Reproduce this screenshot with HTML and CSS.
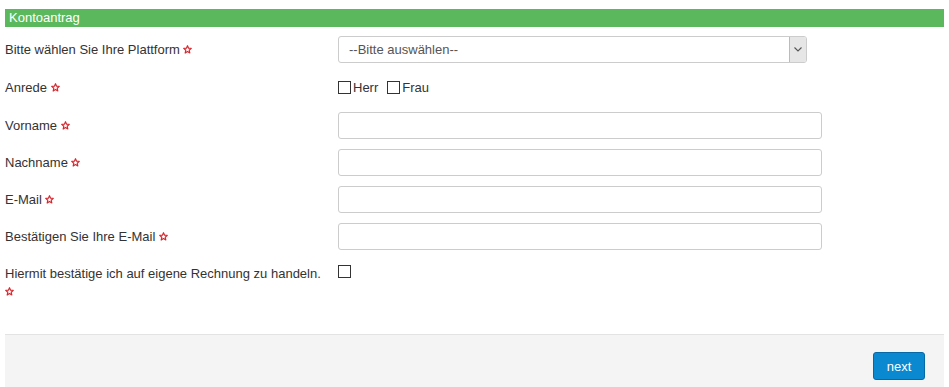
FILE: index.html
```html
<!DOCTYPE html>
<html>
    <head>
        <title>Kontoantrag</title>
        <link rel="stylesheet" href="styles.css">
    </head>
<body>
    <div class="panel">
        <div class="panel-title">Kontoantrag</div>

        <form class="form">
            <div class="row">
                <label>Bitte wählen Sie Ihre Plattform <svg class="req" viewBox="0 0 10 10"><path d="M5 0.8 L6.2 3.6 L9.2 3.8 L6.9 5.8 L7.6 8.9 L5 7.3 L2.4 8.9 L3.1 5.8 L0.8 3.8 L3.8 3.6 Z"/></svg></label>
                <div class="select">
                    <span>--Bitte auswählen--</span>
                    <span class="arrow">
                        <svg width="8" height="5" viewBox="0 0 8 5"><path d="M0.5 0.5 L4 4 L7.5 0.5" fill="none" stroke="#555" stroke-width="1.1"/></svg>
                    </span>
                </div>
            </div>

            <div class="row row-small">
                <label>Anrede <svg class="req" viewBox="0 0 10 10"><path d="M5 0.8 L6.2 3.6 L9.2 3.8 L6.9 5.8 L7.6 8.9 L5 7.3 L2.4 8.9 L3.1 5.8 L0.8 3.8 L3.8 3.6 Z"/></svg></label>
                <div class="choices">
                    <span class="choice"><span class="box"></span>Herr</span>
                    <span class="choice"><span class="box"></span>Frau</span>
                </div>
            </div>

            <div class="row">
                <label>Vorname <svg class="req" viewBox="0 0 10 10"><path d="M5 0.8 L6.2 3.6 L9.2 3.8 L6.9 5.8 L7.6 8.9 L5 7.3 L2.4 8.9 L3.1 5.8 L0.8 3.8 L3.8 3.6 Z"/></svg></label>
                <input type="text" class="field">
            </div>

            <div class="row">
                <label>Nachname <svg class="req" viewBox="0 0 10 10"><path d="M5 0.8 L6.2 3.6 L9.2 3.8 L6.9 5.8 L7.6 8.9 L5 7.3 L2.4 8.9 L3.1 5.8 L0.8 3.8 L3.8 3.6 Z"/></svg></label>
                <input type="text" class="field">
            </div>

            <div class="row">
                <label>E-Mail <svg class="req" viewBox="0 0 10 10"><path d="M5 0.8 L6.2 3.6 L9.2 3.8 L6.9 5.8 L7.6 8.9 L5 7.3 L2.4 8.9 L3.1 5.8 L0.8 3.8 L3.8 3.6 Z"/></svg></label>
                <input type="text" class="field">
            </div>

            <div class="row">
                <label>Bestätigen Sie Ihre E-Mail <svg class="req" viewBox="0 0 10 10"><path d="M5 0.8 L6.2 3.6 L9.2 3.8 L6.9 5.8 L7.6 8.9 L5 7.3 L2.4 8.9 L3.1 5.8 L0.8 3.8 L3.8 3.6 Z"/></svg></label>
                <input type="text" class="field">
            </div>

            <div class="row row-top">
                <label>Hiermit bestätige ich auf eigene Rechnung zu handeln.<br><svg class="req" viewBox="0 0 10 10"><path d="M5 0.8 L6.2 3.6 L9.2 3.8 L6.9 5.8 L7.6 8.9 L5 7.3 L2.4 8.9 L3.1 5.8 L0.8 3.8 L3.8 3.6 Z"/></svg></label>
                <div><span class="box"></span></div>
            </div>
        </form>

        <div class="footer">
            <button type="button" class="btn">next</button>
        </div>
    </div>
</body>
</html>
```

FILE: styles.css
```css
body {
  margin: 0;
  padding: 9px 5px 0 5px;
  font-family: "Liberation Sans", Arial, sans-serif;
  font-size: 13px;
  color: #333;
  background-color: #fff;
}

.panel-title {
  background-color: #5cb85c;
  color: #fff;
  font-size: 13px;
  height: 18px;
  line-height: 17px;
  padding-left: 4px;
}

.form {
  padding-top: 9px;
}

.row {
  display: grid;
  grid-template-columns: 333px 1fr;
  align-items: center;
  min-height: 27px;
  margin-bottom: 10px;
}

.row-small {
  min-height: 29px;
}

.row-top {
  align-items: start;
  margin-top: 5px;
  margin-bottom: 0;
}

.row-top label {
  line-height: 18px;
  padding-top: 5px;
}

.req {
  width: 9px;
  height: 9px;
  fill: none;
  stroke: #d9262d;
  stroke-width: 1.3;
  stroke-linejoin: round;
  vertical-align: 0;
}

.select {
  width: 469px;
  height: 27px;
  box-sizing: border-box;
  border: 1px solid #ccc;
  border-radius: 3px;
  display: flex;
  align-items: center;
  justify-content: space-between;
  padding-left: 10px;
  color: #555;
}

.arrow {
  width: 16px;
  height: 25px;
  border-left: 1px solid #bbb;
  background-color: #e6e6e6;
  display: flex;
  align-items: center;
  justify-content: center;
  border-radius: 0 2px 2px 0;
}

.field {
  width: 484px;
  height: 27px;
  box-sizing: border-box;
  border: 1px solid #ccc;
  border-radius: 3px;
  margin: 0;
  padding: 0 8px;
}

.choices {
  display: flex;
  gap: 9px;
}

.choice {
  display: flex;
  align-items: center;
}

.box {
  display: inline-block;
  width: 11px;
  height: 11px;
  border: 1px solid #333;
  margin-right: 2px;
  vertical-align: top;
}

.row-top .box {
  margin-top: 5px;
}

.footer {
  margin-top: 33px;
  background-color: #f4f4f4;
  border-top: 1px solid #e3e3e3;
  height: 53px;
  display: flex;
  justify-content: flex-end;
  align-items: flex-start;
  padding: 17px 19px 0 0;
  box-sizing: border-box;
}

.btn {
  background-color: #0a88d0;
  border: 1px solid #0569a8;
  border-radius: 3px;
  color: #fff;
  font-family: "Liberation Sans", Arial, sans-serif;
  font-size: 13px;
  width: 52px;
  height: 28px;
}
```
